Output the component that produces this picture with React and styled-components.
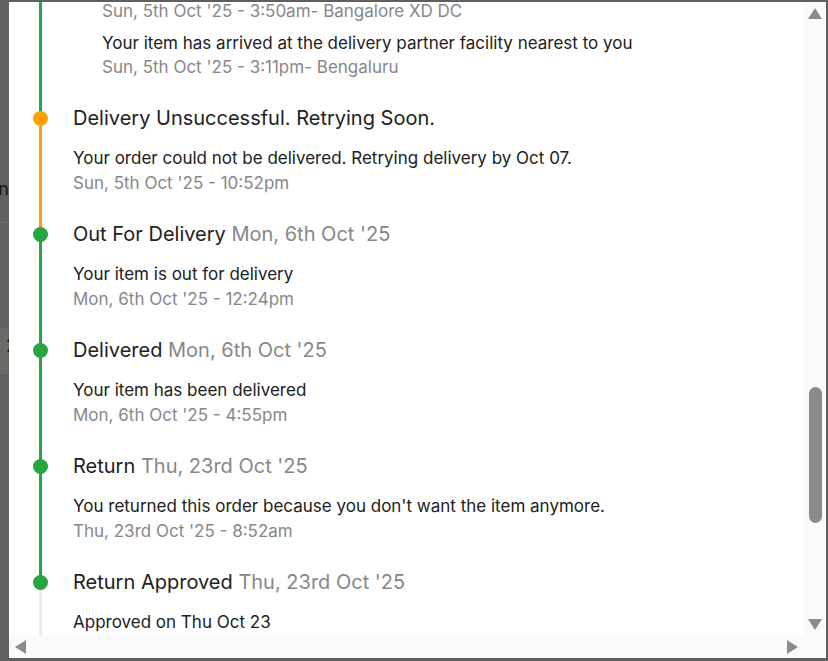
import React, { useLayoutEffect, useRef, useState } from 'react'
import styled, { createGlobalStyle } from 'styled-components'

const GlobalStyle = createGlobalStyle`
  html, body { margin: 0; padding: 0; }
  body {
    background: #5f5f5f;
    font-family: Inter, "Noto Sans", sans-serif;
    overflow: hidden;
  }
`;

const GREEN = '#26a541';
const ORANGE = '#ff9f00';
const PENDING = '#ececec';
const BAR = '#8b8b8b';

const shippedScans = [
  ['Ekart Logistics - FMPP3045871296', "Thu, 2nd Oct '25 - 6:58pm"],
  ['Your item has been shipped.', "Thu, 2nd Oct '25 - 7:12pm"],
  ['Your item has been received in the hub nearest to the seller', "Thu, 2nd Oct '25 - 11:48pm- Bhiwandi MH"],
  ['Your item is being processed at the hub', "Fri, 3rd Oct '25 - 12:36am- Bhiwandi MH"],
  ['Your item has left a Flipkart Facility', "Fri, 3rd Oct '25 - 2:05am- Bhiwandi MH"],
  ['Your item is in transit', "Fri, 3rd Oct '25 - 5:40am- Bhiwandi MH"],
  ['Your item has been received in the Flipkart Facility', "Fri, 3rd Oct '25 - 9:30am- Pune MH"],
  ['Your item is being processed at the hub', "Fri, 3rd Oct '25 - 10:54am- Pune MH"],
  ['Your item has left a Flipkart Facility', "Fri, 3rd Oct '25 - 1:22pm- Pune MH"],
  ['Your item is in transit', "Fri, 3rd Oct '25 - 8:40pm- Solapur MH"],
  ['Your item is in transit', "Fri, 3rd Oct '25 - 11:58pm- Vijayapura KA"],
  ['Your item has been received in the Flipkart Facility', "Sat, 4th Oct '25 - 1:16am- Hubli KA"],
  ['Your item is being processed at the hub', "Sat, 4th Oct '25 - 2:21am- Hubli KA"],
  ['Your item has left a Flipkart Facility', "Sat, 4th Oct '25 - 4:02am- Hubli KA"],
  ['Your item is in transit', "Sat, 4th Oct '25 - 9:27am- Davanagere KA"],
  ['Your item is in transit', "Sat, 4th Oct '25 - 12:15pm- Chitradurga KA"],
  ['Your item is in transit', "Sat, 4th Oct '25 - 2:48pm- Tumkur KA"],
  ['Your item has been received in the hub nearest to you', "Sat, 4th Oct '25 - 9:35pm- Bangalore XD DC"],
  ['Your item is being processed at the hub', "Sat, 4th Oct '25 - 10:42pm- Bangalore XD DC"],
  ['Your item is being processed at the hub', "Sun, 5th Oct '25 - 12:10am- Bangalore XD DC"],
  ['Your item has been bagged for dispatch', "Sun, 5th Oct '25 - 2:31am- Bangalore XD DC"],
  ['Your item has left the hub', "Sun, 5th Oct '25 - 3:50am- Bangalore XD DC"],
  ['Your item has arrived at the delivery partner facility nearest to you', "Sun, 5th Oct '25 - 3:11pm- Bengaluru"],
];

const steps = [
  {
    title: 'Order Confirmed', when: "Thu, 2nd Oct '25", dot: GREEN, line: GREEN,
    scans: [
      ['Your Order has been placed.', "Thu, 2nd Oct '25 - 9:14am"],
      ['Seller has processed your order.', "Thu, 2nd Oct '25 - 11:05am"],
      ['Your item has been picked up by delivery partner.', "Thu, 2nd Oct '25 - 5:40pm"],
    ],
  },
  { title: 'Shipped', when: "Thu, 2nd Oct '25", dot: GREEN, line: GREEN, scans: shippedScans },
  {
    title: 'Delivery Unsuccessful. Retrying Soon.', dot: ORANGE, line: ORANGE, anchor: true,
    text: 'Your order could not be delivered. Retrying delivery by Oct 07.', time: "Sun, 5th Oct '25 - 10:52pm",
  },
  {
    title: 'Out For Delivery', when: "Mon, 6th Oct '25", dot: GREEN, line: GREEN,
    text: 'Your item is out for delivery', time: "Mon, 6th Oct '25 - 12:24pm",
  },
  {
    title: 'Delivered', when: "Mon, 6th Oct '25", dot: GREEN, line: GREEN,
    text: 'Your item has been delivered', time: "Mon, 6th Oct '25 - 4:55pm",
  },
  {
    title: 'Return', when: "Thu, 23rd Oct '25", dot: GREEN, line: GREEN,
    text: "You returned this order because you don't want the item anymore.", time: "Thu, 23rd Oct '25 - 8:52am",
  },
  {
    title: 'Return Approved', when: "Thu, 23rd Oct '25", dot: GREEN, line: PENDING,
    text: 'Approved on Thu Oct 23', time: "Thu, 23rd Oct '25 - 8:53am",
  },
  {
    title: 'Pickup Scheduled', when: "Fri, 24th Oct '25", dot: PENDING, line: PENDING,
    text: 'Pickup will be attempted by Oct 25', time: "Fri, 24th Oct '25 - 10:00am",
  },
  {
    title: 'Item Picked Up', dot: PENDING, line: PENDING,
    text: 'Your item will be picked up from your address', time: 'Expected by Sat, 25th Oct',
  },
  {
    title: 'Refund Completed', dot: PENDING, line: null,
    text: 'Refund will be credited to your original payment method', time: 'Expected by Thu, 30th Oct',
  },
];

export default function App() {
  const viewRef = useRef(null);
  const anchorRef = useRef(null);
  const trackRef = useRef(null);
  const [thumb, setThumb] = useState({ top: 0, height: 0 });

  useLayoutEffect(() => {
    const view = viewRef.current;
    const anchor = anchorRef.current;
    if (!view || !anchor) return;
    const offset = anchor.getBoundingClientRect().top - view.getBoundingClientRect().top;
    view.scrollTop = view.scrollTop + offset - 103;
    const len = trackRef.current.clientHeight;
    setThumb({
      top: (view.scrollTop / view.scrollHeight) * len,
      height: (view.clientHeight / view.scrollHeight) * len,
    });
  }, []);

  return (
    <>
      <GlobalStyle />
      <Frame>
        <Backdrop>
          <Shade $h={222}><PageText $top={177}>n</PageText></Shade>
          <Shade $h={105} $edge />
          <Shade $h={46} $light><PageText $top={6} $left>2</PageText></Shade>
          <Shade $h={285} />
        </Backdrop>
        <Panel>
          <Viewport ref={viewRef}>
            <Header>
              <Heading>Track Order</Heading>
              <Product>
                <Thumb />
                <div>
                  <ProductName>boAt Rockerz 450 Bluetooth On Ear Headphones</ProductName>
                  <ProductMeta>Seller: SuperComNet</ProductMeta>
                  <ProductMeta>Order ID: OD335719804218640100</ProductMeta>
                </div>
              </Product>
            </Header>

            <Timeline>
              {steps.map((s, i) => {
                const pad = s.scans ? 26 : 25;
                return (
                  <Step key={i} ref={s.anchor ? anchorRef : null} $pad={pad}>
                    <Rail $line={s.line} $pad={pad}>
                      <Dot $color={s.dot} />
                    </Rail>
                    <div>
                      <Title>
                        {s.title}
                        {s.when && <When> {s.when}</When>}
                      </Title>
                      <Body>
                        {s.scans ? (
                          <Scans>
                            {s.scans.map(([text, time], j) => (
                              <div key={j}>
                                <Desc>{text}</Desc>
                                <Time $tight>{time}</Time>
                              </div>
                            ))}
                          </Scans>
                        ) : (
                          <>
                            <Desc>{s.text}</Desc>
                            <Time>{s.time}</Time>
                          </>
                        )}
                      </Body>
                    </div>
                  </Step>
                );
              })}
            </Timeline>
          </Viewport>

          <VBar>
            <ArrowBtn><Arrow $dir="up" /></ArrowBtn>
            <Track ref={trackRef}>
              <ThumbBar style={{ marginTop: thumb.top, height: thumb.height }} />
            </Track>
            <ArrowBtn><Arrow $dir="down" /></ArrowBtn>
          </VBar>

          <HBar>
            <ArrowBtn $h><Arrow $dir="left" /></ArrowBtn>
            <ArrowBtn $h><Arrow $dir="right" /></ArrowBtn>
          </HBar>
          <Corner />
        </Panel>
      </Frame>
    </>
  );
}

const Frame = styled.div`
  display: flex;
  height: 661px;
  box-sizing: border-box;
  padding: 2px 2px 3px 0;
`;

const Backdrop = styled.div`
  width: 9px;
  flex-shrink: 0;
  margin-top: -2px;
  display: flex;
  flex-direction: column;
  overflow: hidden;
`;

const Shade = styled.div`
  position: relative;
  height: ${p => p.$h}px;
  flex-shrink: 0;
  background: ${p => (p.$light ? '#6a6a66' : '#616161')};
  border-top: ${p => (p.$edge ? '1px solid #6b6b6b' : 'none')};
`;

const PageText = styled.span`
  position: absolute;
  top: ${p => p.$top}px;
  ${p => (p.$left ? 'left: 6px;' : 'right: 0;')}
  font-size: 18px;
  line-height: 24px;
  color: #151515;
`;

const Panel = styled.div`
  flex: 1;
  min-width: 0;
  display: grid;
  grid-template-columns: 1fr 22px;
  grid-template-rows: 1fr 22px;
  background: #fff;
`;

const Viewport = styled.div`
  overflow: hidden;
  min-height: 0;
`;

const VBar = styled.div`
  display: flex;
  flex-direction: column;
  background: #fafafa;
`;

const HBar = styled.div`
  display: flex;
  justify-content: space-between;
  background: #fafafa;
`;

const Corner = styled.div`
  background: #fafafa;
`;

const ArrowBtn = styled.div`
  flex-shrink: 0;
  display: flex;
  align-items: center;
  justify-content: center;
  width: ${p => (p.$h ? '23px' : '22px')};
  height: ${p => (p.$h ? '22px' : '23px')};
`;

const Arrow = styled.span`
  width: 0;
  height: 0;
  ${p => p.$dir === 'up' && `
    border-left: 7.5px solid transparent;
    border-right: 7.5px solid transparent;
    border-bottom: 11px solid ${BAR};
  `}
  ${p => p.$dir === 'down' && `
    border-left: 7.5px solid transparent;
    border-right: 7.5px solid transparent;
    border-top: 11px solid ${BAR};
  `}
  ${p => p.$dir === 'left' && `
    border-top: 7px solid transparent;
    border-bottom: 7px solid transparent;
    border-right: 11px solid ${BAR};
  `}
  ${p => p.$dir === 'right' && `
    border-top: 7px solid transparent;
    border-bottom: 7px solid transparent;
    border-left: 11px solid ${BAR};
  `}
`;

const Track = styled.div`
  flex: 1;
  min-height: 0;
  display: flex;
  flex-direction: column;
  align-items: center;
`;

const ThumbBar = styled.div`
  width: 13px;
  border-radius: 7px;
  background: ${BAR};
`;

const Header = styled.div`
  padding: 40px 32px 38px 64px;
  border-bottom: 1px solid #f0f0f0;
`;

const Heading = styled.h2`
  margin: 0 0 16px;
  font-size: 20px;
  line-height: 24px;
  font-weight: 500;
  color: #212121;
`;

const Product = styled.div`
  display: flex;
  gap: 16px;
  align-items: center;
  height: 72px;
`;

const Thumb = styled.div`
  width: 72px;
  height: 72px;
  border-radius: 4px;
  background: #f1f3f6;
`;

const ProductName = styled.div`
  font-size: 16px;
  line-height: 24px;
  color: #212121;
  margin-bottom: 6px;
`;

const ProductMeta = styled.div`
  font-size: 14px;
  color: #878787;
  line-height: 20px;
`;

const Timeline = styled.div`
  padding: 24px 0 24px;
`;

const Step = styled.div`
  display: grid;
  grid-template-columns: 64px 1fr;
  padding-bottom: ${p => p.$pad}px;
`;

const Rail = styled.div`
  position: relative;
  margin-bottom: -${p => p.$pad}px;

  &::after {
    content: '';
    display: ${p => (p.$line ? 'block' : 'none')};
    position: absolute;
    left: 30px;
    width: 3px;
    top: 13px;
    bottom: -13px;
    background: ${p => p.$line};
  }
`;

const Dot = styled.span`
  position: absolute;
  z-index: 1;
  left: 24px;
  top: 5.5px;
  width: 15px;
  height: 15px;
  border-radius: 50%;
  background: ${p => p.$color};
`;

const Title = styled.div`
  font-size: 20px;
  line-height: 26px;
  color: #212121;
  white-space: nowrap;
`;

const When = styled.span`
  color: #878787;
`;

const Body = styled.div`
  margin-top: 15px;
`;

const Scans = styled.div`
  padding-left: 29px;
  display: flex;
  flex-direction: column;
  gap: 8px;
`;

const Desc = styled.div`
  font-size: 17px;
  line-height: 24px;
  color: #212121;
  white-space: nowrap;
`;

const Time = styled.div`
  font-size: 17px;
  line-height: ${p => (p.$tight ? 24 : 26)}px;
  color: #878787;
  white-space: nowrap;
`;
